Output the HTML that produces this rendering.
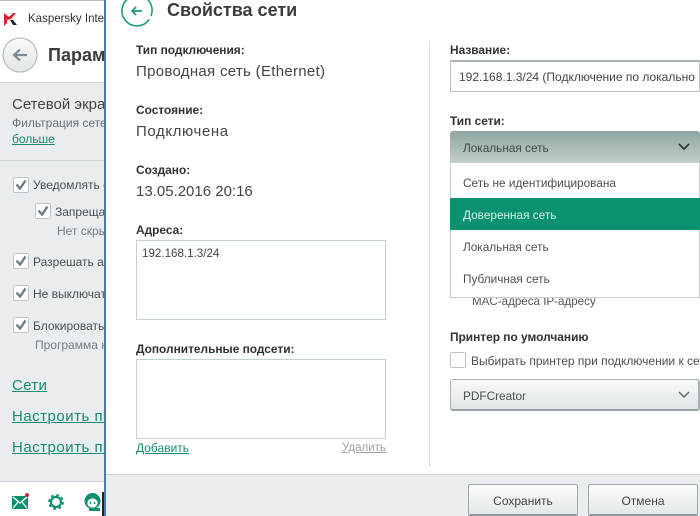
<!DOCTYPE html>
<html lang="ru"><head><meta charset="utf-8"><style>
html,body{margin:0;padding:0;background:#fff}
#p{position:relative;width:700px;height:516px;overflow:hidden;background:#fff;font-family:"Liberation Sans","DejaVu Sans",sans-serif;color:#333}
#p div,#p svg,#p a{position:absolute}
.t{white-space:nowrap;line-height:16px}
.b{font-weight:bold;font-size:11.9px;color:#2f3233}
.v{font-size:15px;letter-spacing:.3px;color:#444}
.l{color:#1a8a70;text-decoration:underline}
.c{width:14px;height:14px;border:1px solid #bcc3c6;border-radius:2px;background:#fff}
.s{font-size:12px;color:#4a4f52}
.m{font-size:11.8px;color:#4a4f52}
.box{border:1px solid #c3d0d4;background:#fff;box-sizing:border-box}
.btn{box-sizing:border-box;border:1px solid #9fa9ac;border-bottom:2px solid #8f999c;border-radius:2px;background:linear-gradient(#fbfcfc,#e3e8e9);font-size:12px;color:#444;text-align:center;line-height:33px}
</style></head><body><div id="p">

<!-- left window -->
<div style="left:0;top:0;width:104px;height:1px;background:#b8b8b8"></div>
<svg style="left:4px;top:13px" width="13" height="13" viewBox="0 0 13 13"><path d="M0 0L5 4 9 0 12 0 7 6 3 7 3 10 0 13Z" fill="#e3202f"/><path d="M6 7L9 7 13 12 9 12Z" fill="#222"/></svg>
<div class="t" style="left:28px;top:11px;font-size:11.5px;color:#333;width:76px;overflow:hidden">Kaspersky Internet</div>
<svg style="left:2px;top:37px" width="36" height="36" viewBox="0 0 36 36"><defs><linearGradient id="g" x1="0" y1="0" x2="0" y2="1"><stop offset="0" stop-color="#fafafa"/><stop offset="1" stop-color="#e2e6e6"/></linearGradient></defs><circle cx="18" cy="18" r="17" fill="url(#g)" stroke="#b4bcbc" stroke-width="1.2"/><path d="M25 18H12M18 12.500l-6 5.500 6 5.500" fill="none" stroke="#7a8b92" stroke-width="2.2"/></svg>
<div class="t" style="left:48px;top:45px;font-size:18px;font-weight:bold;color:#3a3d3e;width:56px;overflow:hidden;line-height:20px">Параметры</div>

<div style="left:0;top:82px;width:104px;height:400px;background:#e9edf0;border-top:1px solid #cdd3d6;border-bottom:1px solid #cdd3d6;box-sizing:border-box"></div>
<div class="t" style="left:12px;top:97px;font-size:15px;color:#444;width:92px;overflow:hidden">Сетевой экран</div>
<div class="t" style="left:12px;top:115px;font-size:12px;color:#6a7073;width:92px;overflow:hidden">Фильтрация сетевой</div>
<div class="t l" style="left:12px;top:131px;font-size:12px">больше</div>
<div style="left:0;top:160px;width:104px;height:1px;background:#d3d8da"></div>

<div class="c" style="left:13px;top:177px"></div><svg style="left:13px;top:177px" width="16" height="16" viewBox="0 0 16 16"><path d="M3.500 7.500l3.500 4L12.500 3.500" fill="none" stroke="#6c7d83" stroke-width="2.4"/></svg>
<div class="t s" style="left:33px;top:177px;width:71px;overflow:hidden">Уведомлять о</div>
<div class="c" style="left:35px;top:203px"></div><svg style="left:35px;top:203px" width="16" height="16" viewBox="0 0 16 16"><path d="M3.500 7.500l3.500 4L12.500 3.500" fill="none" stroke="#6c7d83" stroke-width="2.4"/></svg>
<div class="t s" style="left:55px;top:204px;width:49px;overflow:hidden">Запрещать</div>
<div class="t s" style="left:57px;top:223px;width:47px;overflow:hidden;color:#767c7f">Нет скрытых</div>
<div class="c" style="left:13px;top:253px"></div><svg style="left:13px;top:253px" width="16" height="16" viewBox="0 0 16 16"><path d="M3.500 7.500l3.500 4L12.500 3.500" fill="none" stroke="#6c7d83" stroke-width="2.4"/></svg>
<div class="t s" style="left:33px;top:254px;width:71px;overflow:hidden">Разрешать акт</div>
<div class="c" style="left:13px;top:285px"></div><svg style="left:13px;top:285px" width="16" height="16" viewBox="0 0 16 16"><path d="M3.500 7.500l3.500 4L12.500 3.500" fill="none" stroke="#6c7d83" stroke-width="2.4"/></svg>
<div class="t s" style="left:33px;top:286px;width:71px;overflow:hidden">Не выключать</div>
<div class="c" style="left:13px;top:317px"></div><svg style="left:13px;top:317px" width="16" height="16" viewBox="0 0 16 16"><path d="M3.500 7.500l3.500 4L12.500 3.500" fill="none" stroke="#6c7d83" stroke-width="2.4"/></svg>
<div class="t s" style="left:33px;top:318px;width:71px;overflow:hidden">Блокировать</div>
<div class="t s" style="left:35px;top:337px;width:69px;overflow:hidden;color:#767c7f">Программа не</div>

<div class="t l" style="left:12px;top:378px;font-size:15px;letter-spacing:.3px">Сети</div>
<div class="t l" style="left:12px;top:409px;font-size:15px;letter-spacing:.5px;width:92px;overflow:hidden">Настроить параметры</div>
<div class="t l" style="left:12px;top:440px;font-size:15px;letter-spacing:.5px;width:92px;overflow:hidden">Настроить параметры</div>

<svg style="left:11px;top:492px" width="20" height="20" viewBox="0 0 20 20"><rect x="1" y="4" width="16" height="13" fill="#0e8f70"/><path d="M2 5l7 6 7-6M2 16l5-6M16 16l-5-6" fill="none" stroke="#fff" stroke-width="1.3"/><circle cx="16" cy="3" r="2" fill="#c8304a"/></svg>
<svg style="left:47px;top:493px" width="18" height="18" viewBox="0 0 18 18"><circle cx="9" cy="9" r="5" fill="none" stroke="#0e8f70" stroke-width="2.2"/><circle cx="9" cy="9" r="7" fill="none" stroke="#0e8f70" stroke-width="1.8" stroke-dasharray="2.75 2.75"/></svg>
<svg style="left:84px;top:493px" width="18" height="18" viewBox="0 0 18 18"><circle cx="8.500" cy="8" r="8" fill="#0e8f70"/><ellipse cx="8.500" cy="10" rx="5.200" ry="4.600" fill="#fff"/><circle cx="6.500" cy="10" r="1" fill="#0e8f70"/><circle cx="10.500" cy="10" r="1" fill="#0e8f70"/><rect x="5" y="15" width="11" height="3" fill="#0e8f70"/></svg>

<!-- divider -->
<div style="left:104px;top:0;width:2px;height:516px;background:#4a78bd"></div>
<div style="left:102px;top:492px;width:2px;height:24px;background:#222"></div>

<!-- modal -->
<svg style="left:121px;top:-5px" width="32" height="32" viewBox="0 0 32 32"><path d="M11 1.700A15 15 0 1 0 27 26" transform="rotate(-8 16 16)" fill="none" stroke="#1f9c80" stroke-width="1.6"/><path d="M27 5A15 15 0 0 1 30 21" fill="none" stroke="#1f9c80" stroke-width="1.6"/><path d="M21 16H11M15 12l-4 4 4 4" fill="none" stroke="#1f9c80" stroke-width="1.8"/></svg>
<div class="t" style="left:167px;top:0;font-size:18px;font-weight:bold;color:#3a3d3e;line-height:20px">Свойства сети</div>

<div class="t b" style="left:136px;top:42px">Тип подключения:</div>
<div class="t v" style="left:136px;top:64px">Проводная сеть (Ethernet)</div>
<div class="t b" style="left:136px;top:102px">Состояние:</div>
<div class="t v" style="left:136px;top:124px;letter-spacing:.6px">Подключена</div>
<div class="t b" style="left:136px;top:162px">Создано:</div>
<div class="t v" style="left:136px;top:184px;letter-spacing:0">13.05.2016 20:16</div>
<div class="t b" style="left:136px;top:222px">Адреса:</div>
<div class="box" style="left:136px;top:240px;width:250px;height:80px"></div>
<div class="t" style="left:142px;top:246px;font-size:11.6px;color:#444">192.168.1.3/24</div>
<div class="t b" style="left:136px;top:341px">Дополнительные подсети:</div>
<div class="box" style="left:136px;top:359px;width:250px;height:80px"></div>
<div class="t l" style="left:136px;top:440px;font-size:12px">Добавить</div>
<div class="t" style="left:342px;top:440px;font-size:11.5px;color:#9aa2a5;text-decoration:underline">Удалить</div>

<div style="left:429px;top:41px;width:1px;height:426px;background:#d8dcde"></div>

<div class="t b" style="left:450px;top:42px">Название:</div>
<div style="left:450px;top:60px;width:250px;height:32px;box-sizing:border-box;border:1px solid #b9c2c4;border-top:2px solid #a9b2b4;background:#fff;border-radius:2px 0 0 2px"></div>
<div class="t" style="left:459px;top:69px;font-size:12px;color:#444;width:241px;overflow:hidden">192.168.1.3/24 (Подключение по локально</div>
<div class="t b" style="left:450px;top:113px">Тип сети:</div>
<div style="left:450px;top:131px;width:250px;height:33px;background:linear-gradient(#8fa6a2,#c3d0cc);border-radius:3px 3px 0 0"></div>
<div class="t" style="left:463px;top:140px;font-size:11.8px;color:#3f4a48">Локальная сеть</div>
<svg style="left:677px;top:142px" width="14" height="10" viewBox="0 0 14 10"><path d="M2 2l5 5 5-5" fill="none" stroke="#2c3432" stroke-width="1.7"/></svg>

<div class="t" style="left:472px;top:294px;font-size:11.6px;color:#555">MAC-адреса IP-адресу</div>
<div style="left:450px;top:163px;width:250px;height:135px;box-sizing:border-box;background:#fff;border:1px solid #c5d0cf;border-top:0"></div>
<div class="t m" style="left:463px;top:175px">Сеть не идентифицирована</div>
<div style="left:450px;top:198px;width:250px;height:32px;background:#0a9270"></div>
<div class="t m" style="left:463px;top:207px;color:#d8f0e8">Доверенная сеть</div>
<div class="t m" style="left:463px;top:239px">Локальная сеть</div>
<div class="t m" style="left:463px;top:271px">Публичная сеть</div>

<div class="t b" style="left:450px;top:329px">Принтер по умолчанию</div>
<div class="c" style="left:450px;top:352px"></div>
<div class="t s" style="left:471px;top:353px;width:229px;overflow:hidden">Выбирать принтер при подключении к сети</div>
<div style="left:450px;top:379px;width:250px;height:32px;box-sizing:border-box;border:1px solid #a9b2b4;border-bottom:2px solid #98a2a4;border-right:2px solid #a9b2b4;border-radius:3px;background:linear-gradient(#f9fafa,#dfe5e5)"></div>
<div class="t m" style="left:463px;top:388px">PDFCreator</div>
<svg style="left:677px;top:390px" width="14" height="10" viewBox="0 0 14 10"><path d="M2 2l5 5 5-5" fill="none" stroke="#5b6568" stroke-width="1.4"/></svg>

<div style="left:106px;top:474px;width:594px;height:42px;background:#e9edf0;border-top:1px solid #ccd3d6;box-sizing:border-box"></div>
<div class="btn" style="left:468px;top:484px;width:110px;height:32px">Сохранить</div>
<div class="btn" style="left:588px;top:484px;width:110px;height:32px">Отмена</div>
</div></body></html>
